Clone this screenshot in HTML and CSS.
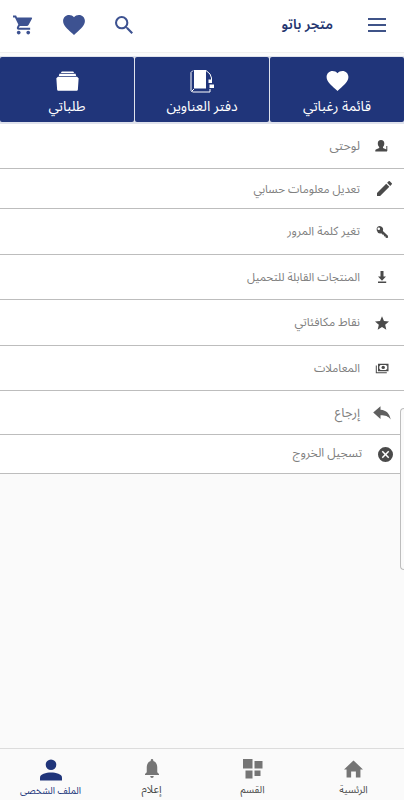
FILE: index.html
```html
<!DOCTYPE html>
<html lang="ar" dir="rtl">
  <head>
    <meta charset="UTF-8" />
    <meta name="viewport" content="width=device-width, initial-scale=1.0" />
    <title>متجر باتو</title>
    <link rel="stylesheet" href="styles.css">
  </head>
  <body>
    <!-- Header -->
    <header class="header">
      <button class="menu-btn" aria-label="القائمة">
        <span></span>
        <span></span>
        <span></span>
      </button>
      <h1 class="title">متجر باتو</h1>
      <div class="header-icons">
        <svg class="icon-search" viewBox="3 3 17.5 17.5"><path d="M15.5 14h-.79l-.28-.27A6.47 6.47 0 0 0 16 9.5 6.5 6.5 0 1 0 9.5 16c1.61 0 3.09-.59 4.23-1.57l.27.28v.79l5 4.99L20.49 19l-4.99-5zm-6 0a4.5 4.5 0 1 1 0-9 4.5 4.5 0 0 1 0 9z"/></svg>
        <svg class="icon-heart" viewBox="2 3 20 18.35"><path d="M12 21.35l-1.45-1.32C5.4 15.36 2 12.28 2 8.5 2 5.42 4.42 3 7.5 3c1.74 0 3.41.81 4.5 2.09C13.09 3.81 14.76 3 16.5 3 19.58 3 22 5.42 22 8.5c0 3.78-3.4 6.86-8.55 11.54z"/></svg>
        <svg class="icon-cart" viewBox="1 2 21 20"><path d="M7 18c-1.1 0-1.99.9-1.99 2S5.9 22 7 22s2-.9 2-2-.9-2-2-2zM1 2v2h2l3.6 7.59-1.35 2.45C4.52 15.37 5.48 17 7 17h12v-2H7.42a.25.25 0 0 1-.25-.25l.03-.12.9-1.63h7.45c.75 0 1.41-.41 1.75-1.03l3.58-6.49A1 1 0 0 0 20 4H5.21l-.94-2H1zm16 16c-1.1 0-1.99.9-1.99 2s.89 2 1.99 2 2-.9 2-2-.9-2-2-2z"/></svg>
      </div>
    </header>

    <!-- Quick links -->
    <nav class="tabs">
      <a class="tab">
        <svg class="tab-heart" viewBox="2 3 20 18.35"><path d="M12 21.35l-1.45-1.32C5.4 15.36 2 12.28 2 8.5 2 5.42 4.42 3 7.5 3c1.74 0 3.41.81 4.5 2.09C13.09 3.81 14.76 3 16.5 3 19.58 3 22 5.42 22 8.5c0 3.78-3.4 6.86-8.55 11.54z"/></svg>
        <span>قائمة رغباتي</span>
      </a>
      <a class="tab">
        <svg class="tab-book" viewBox="0 0 24 23">
          <path d="M4 0h12v18.500H4z"/>
          <path class="line" d="M3 .5 1 2.500v18l1.500 1.500h17.500V19M16 .5l4 3.500 1.500 4v2M1.500 21.500 4 19"/>
          <path d="M18.500 9.500h3.500v3.500h-3.500zM19.500 14.500H24v3.500h-4.500z"/>
        </svg>
        <span>دفتر العناوين</span>
      </a>
      <a class="tab">
        <svg class="tab-folder" viewBox="0 0 24 21">
          <path d="M6 .4h12l1 1.800H5zM3.500 2.800h17l.6 2.400H2.900zM.3 7.500 2 6h20l1.700 1.500-.8 12c-.1.900-.7 1.300-1.500 1.300H2.600c-.8 0-1.400-.4-1.500-1.300z"/>
        </svg>
        <span>طلباتي</span>
      </a>
    </nav>

    <!-- Account menu -->
    <ul class="menu">
      <li class="item dashboard">
        <svg viewBox="0 0 14 14"><path d="M6 1c2.300 0 3.300 1.300 3.300 3.400 0 1.500-.5 2.700-1.300 3.500v1.200l3.500 1.400c.5.300.5 1.200.5 2H.3c0-.9 0-1.700.6-2L4.200 9.100V7.900C3.300 7.100 2.800 5.900 2.800 4.400 2.800 2.300 3.800 1 6 1zM11.300 7h1v5h-1z"/></svg>
        <span>لوحتى</span>
      </li>
      <li class="item edit">
        <svg viewBox="3 3 18 18"><path d="M3 17.250V21h3.750L17.810 9.940l-3.750-3.750L3 17.250zM20.710 7.040a1 1 0 0 0 0-1.410l-2.340-2.340a1 1 0 0 0-1.410 0l-1.830 1.830 3.750 3.750 1.830-1.830z"/></svg>
        <span>تعديل معلومات حسابي</span>
      </li>
      <li class="item password">
        <svg viewBox="0 0 14 14"><path fill-rule="evenodd" d="M4.500 1a3.600 3.600 0 0 1 3.400 4.900l5 4.800.2 2.100-2.300.1-.3-1.500-1.500-.2-.2-1.500-1.500-.2-1-1.300A3.700 3.700 0 1 1 4.500 1zM3.700 2.500a1.300 1.300 0 1 0 .1 2.600 1.300 1.300 0 0 0-.1-2.600z"/></svg>
        <span>تغير كلمة المرور</span>
      </li>
      <li class="item download">
        <svg viewBox="0 0 14 14"><path d="M5.500 1h3v5.500H11L7 10.700 3 6.500h2.500zM3 11.600h8.200v1.500H3z"/></svg>
        <span>المنتجات القابلة للتحميل</span>
      </li>
      <li class="item points">
        <svg viewBox="2 2 20 19"><path d="M12 17.270 18.180 21l-1.640-7.030L22 9.240l-7.190-.61L12 2 9.190 8.630 2 9.240l5.460 4.730L5.820 21z"/></svg>
        <span>نقاط مكافئاتي</span>
      </li>
      <li class="item transactions">
        <svg viewBox="0 0 14 14"><path fill-rule="evenodd" d="M3 2.700h10.500v7.500H3zM4.300 4v4.900h7.900V4z"/><path d="M.8 4.500h1v6.700h10v1H.8z"/><circle cx="8.200" cy="6.400" r="1.700"/><path d="M4 3.700h1.800L4 5.400zM12.500 3.700h-1.800l1.800 1.700zM4 9.200h1.800L4 7.500zM12.500 9.200h-1.800l1.800-1.700z"/></svg>
        <span>المعاملات</span>
      </li>
      <li class="item returns">
        <svg viewBox="0 0 18 14"><path d="M7.500 .3v3.400c6 .5 9 3.900 10.200 9.800-2.700-3.400-5.200-4.200-10.200-4.200V13L.2 6.500z"/></svg>
        <span>إرجاع</span>
      </li>
      <li class="item logout">
        <svg viewBox="2 2 20 20"><path d="M12 2a10 10 0 1 0 0 20 10 10 0 0 0 0-20zm5 13.590L15.590 17 12 13.410 8.410 17 7 15.590 10.590 12 7 8.410 8.410 7 12 10.590 15.590 7 17 8.410 13.410 12z"/></svg>
        <span>تسجيل الخروج</span>
      </li>
    </ul>

    <!-- Edge panel handle -->
    <div class="edge-handle"></div>

    <!-- Bottom navigation -->
    <nav class="bottom-nav">
      <a class="nav-item">
        <svg class="nav-home" viewBox="0 0 20 18"><path d="M10 0 20 9.500h-2.700V18h-4.800v-6.500h-5V18H2.700V9.500H0z"/></svg>
        <span>الرئسية</span>
      </a>
      <a class="nav-item">
        <svg class="nav-grid" viewBox="0 0 20 20"><path d="M0 0h9.500v9.500H0zM11.500 2h8v7.500h-8zM2.500 11.500h7V19.500h-7zM11.500 11.500h6V17h-6z"/></svg>
        <span>القسم</span>
      </a>
      <a class="nav-item nav-alerts">
        <svg class="nav-bell" viewBox="4 2.500 16 19.500" preserveAspectRatio="none"><path d="M12 22a2 2 0 0 0 2-2h-4c0 1.100.9 2 2 2zm6-6v-5c0-3.070-1.640-5.640-4.500-6.320V4a1.500 1.500 0 0 0-3 0v.68C7.630 5.360 6 7.920 6 11v5l-2 2v1h16v-1z"/></svg>
        <span>إعلام</span>
      </a>
      <a class="nav-item active">
        <svg class="nav-user" viewBox="0 0 22 22"><circle cx="11" cy="5.800" r="5.300"/><path d="M0 21.500v-3c0-3.500 6-5 11-5s11 1.500 11 5v3z"/></svg>
        <span>الملف الشخصى</span>
      </a>
    </nav>
  </body>
</html>
```
FILE: styles.css
```css
* {
  margin: 0;
  padding: 0;
  box-sizing: border-box;
}

body {
  display: flex;
  flex-direction: column;
  height: 800px;
  overflow: hidden;
  background-color: #fafafa;
  font-family: "Noto Sans Arabic", "Noto Sans", "DejaVu Sans", sans-serif;
}

svg {
  display: block;
  flex-shrink: 0;
  fill: currentColor;
}

/* Header */
.header {
  display: flex;
  align-items: center;
  height: 53px;
  padding: 0 18px 3px 13px;
  background-color: #fff;
  border-bottom: 1px solid #f0f0f0;
}

.menu-btn {
  display: flex;
  flex-direction: column;
  gap: 4px;
  width: 18px;
  border: none;
  background: none;
}

.menu-btn span {
  height: 2px;
  background-color: #3f5388;
}

.title {
  margin-right: 35px;
  font-size: 13.8px;
  font-weight: 600;
  color: #24356f;
  white-space: nowrap;
}

.header-icons {
  display: flex;
  align-items: center;
  gap: 30px;
  margin-right: auto;
  color: #3d5291;
}

.icon-search {
  width: 18px;
  height: 18px;
}

.icon-heart {
  width: 22px;
  height: 20px;
}

.icon-cart {
  width: 20px;
  height: 20px;
}

/* Quick links */
.tabs {
  display: flex;
  gap: 1px;
  height: 71px;
  padding: 1px 0 2px;
  background-color: #dfe2ec;
  border-top: 3px solid #fbfbfb;
}

.tab {
  flex: 1;
  display: flex;
  flex-direction: column;
  align-items: center;
  justify-content: space-between;
  padding: 14px 0 5px;
  background-color: #20357a;
  border-radius: 2px;
  color: #fff;
}

.tab span {
  font-size: 14px;
  line-height: 20px;
  white-space: nowrap;
}

.tab .line {
  fill: none;
  stroke: currentColor;
}

.tab-heart {
  width: 23px;
  height: 20px;
}

.tab-book {
  width: 24px;
  height: 23px;
  margin-top: -1px;
}

.tab-folder {
  width: 23px;
  height: 20px;
}

/* Account menu */
.menu {
  list-style: none;
  background-color: #fff;
}

.item {
  display: flex;
  align-items: center;
  height: 45px;
  padding-right: 15px;
  border-bottom: 1px solid #bdbdbd;
  color: #4a4a4a;
}

.item svg {
  width: 14px;
  height: 14px;
}

.item span {
  margin-right: 15px;
  font-size: 11.5px;
  line-height: 20px;
  color: #808080;
  white-space: nowrap;
}

.item.dashboard span {
  font-size: 12.5px;
}

.item.edit {
  height: 40px;
  padding-right: 12px;
}

.item.edit svg {
  width: 15px;
  height: 15px;
}

.item.edit span {
  margin-right: 17px;
}

.item.password,
.item.points {
  height: 46px;
}

.item.password span,
.item.points span {
  font-size: 11.8px;
}

.item.returns {
  height: 44px;
  padding-right: 13px;
  color: #5f5f5f;
}

.item.returns svg {
  width: 18px;
}

.item.returns span {
  margin-right: 13px;
  font-size: 13px;
}

.item.logout {
  height: 39px;
  padding-right: 11px;
}

.item.logout svg {
  width: 15px;
  height: 15px;
}

.item.logout span {
  margin-right: 16px;
  font-size: 12px;
}

/* Edge panel handle */
.edge-handle {
  position: absolute;
  top: 408px;
  right: 0;
  width: 4px;
  height: 162px;
  border: 1px solid #bdbdbd;
  border-right: none;
  border-radius: 5px 0 0 5px;
  background-color: #fafafa;
}

/* Bottom navigation */
.bottom-nav {
  display: flex;
  height: 52px;
  margin-top: auto;
  border-top: 1px solid #dcdcdc;
}

.nav-item {
  flex: 1;
  display: flex;
  flex-direction: column;
  align-items: center;
  justify-content: space-between;
  padding: 10px 0 3px;
  color: #757575;
}

.nav-item span {
  font-size: 10px;
  line-height: 14px;
  color: #4c4c4c;
  white-space: nowrap;
}

.nav-alerts span {
  font-size: 11px;
}

.nav-item.active {
  padding-bottom: 2px;
}

.nav-item.active,
.nav-item.active span {
  color: #20357a;
}

.nav-item.active span {
  font-size: 9.5px;
}

.nav-home {
  width: 19px;
  height: 20px;
}

.nav-grid {
  width: 20px;
  height: 20px;
}

.nav-bell {
  width: 14px;
  height: 19px;
}

.nav-user {
  width: 22px;
  height: 22px;
}
```
